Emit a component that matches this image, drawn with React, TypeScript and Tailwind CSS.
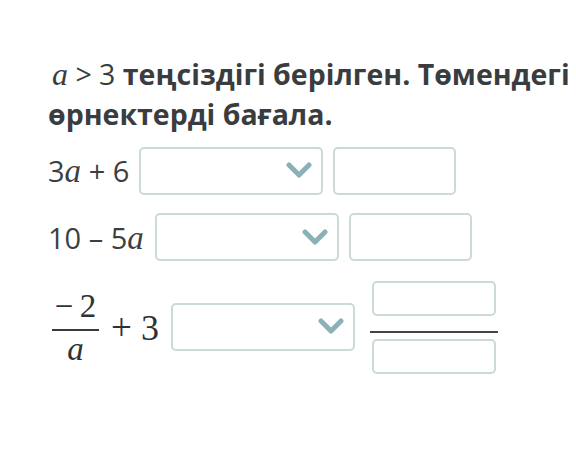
function Chevron() {
  return (
    <svg width="26" height="17" viewBox="0 0 26 17" className="shrink-0">
      <path d="M3 3 L13 13 L23 3" fill="none" stroke="#8cb0b8" strokeWidth="5" strokeLinecap="round" strokeLinejoin="round" />
    </svg>
  );
}

function Select({ className }: { className: string }) {
  return (
    <div className={`h-[48px] w-[184px] rounded-[5px] border-2 border-[#cbd9d9] bg-white flex items-center justify-end pr-[9px] ${className}`}>
      <Chevron />
    </div>
  );
}

function Box({ className }: { className: string }) {
  return <div className={`rounded-[5px] border-2 border-[#cbd9d9] bg-white ${className}`} />;
}

const mathFont = { fontFamily: '"Liberation Serif", "DejaVu Serif", serif' };

function A() {
  return (
    <span className="italic" style={mathFont}>
      a
    </span>
  );
}

export default function App() {
  return (
    <div
      className="w-[576px] h-[454px] bg-white text-[#3a3d40] pl-12 pt-[53px] overflow-hidden"
      style={{ fontFamily: '"Open Sans", "Noto Sans", sans-serif' }}
    >
      <p className="text-[28.5px] leading-[40px] font-bold whitespace-nowrap">
        <span className="font-normal pl-1">
          <span className="text-[32px]"><A /></span> &gt; 3
        </span>{" "}
        теңсіздігі берілген. Төмендегі
        <br />
        өрнектерді бағала.
      </p>

      <div className="mt-[11px] flex items-center">
        <span className="text-[29px] text-[#3c3f42]">
          3<span className="text-[33px]"><A /></span> + 6
        </span>
        <Select className="ml-[10px]" />
        <Box className="ml-[10px] w-[123px] h-[48px]" />
      </div>

      <div className="mt-[15px] flex items-center">
        <span className="text-[29px] text-[#3c3f42]">
          10 – 5<span className="text-[33px]"><A /></span>
        </span>
        <Select className="ml-[11px]" />
        <Box className="ml-[10px] w-[123px] h-[48px]" />
      </div>

      <div className="mt-[18px] flex items-center">
        <div className="flex items-center text-[33px] text-[#2f3235]" style={mathFont}>
          <div className="flex flex-col items-center w-[47px] ml-[4px]">
            <span className="leading-[34px]">−&thinsp;2</span>
            <div className="h-[2px] w-full bg-[#3a3a3a] mt-[6px]" />
            <span className="italic leading-[36px]">a</span>
          </div>
          <span className="ml-[12px] text-[37px]">+</span>
          <span className="ml-[9px] text-[36px]">3</span>
        </div>
        <Select className="ml-[12px] -mt-[2px]" />
        <div className="ml-[15px] flex flex-col items-center w-[128px]">
          <Box className="w-[124px] h-[35px]" />
          <div className="mt-[15px] h-[2px] w-full bg-[#444]" />
          <Box className="mt-[6px] w-[124px] h-[35px]" />
        </div>
      </div>
    </div>
  );
}
